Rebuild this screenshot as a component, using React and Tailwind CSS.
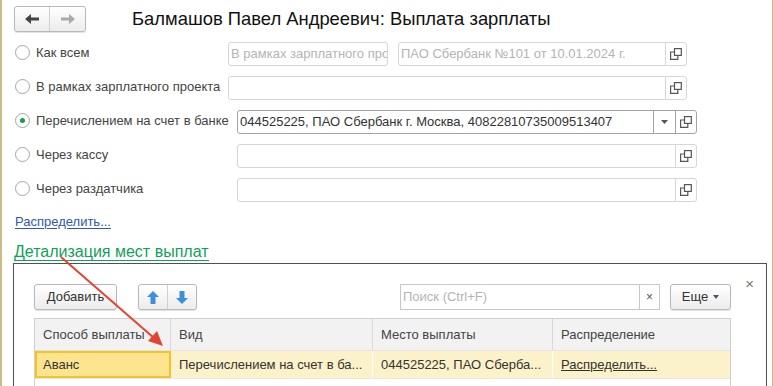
import React from "react";

const CopyIcon = () => (
  <svg width="12" height="12" viewBox="0 0 12 12" fill="none" stroke="#555" strokeWidth="1.2">
    <rect x="4.5" y="0.6" width="6.8" height="6.8" />
    <path d="M4.5 4 H0.6 V11.4 H7.8 V7.4" />
  </svg>
);

const Radio = ({ checked }) => (
  <span className="flex h-[15px] w-[15px] shrink-0 items-center justify-center rounded-full border border-[#a6a6a6] bg-white">
    {checked && <span className="h-[5px] w-[5px] rounded-full bg-[#1a9c4c]" />}
  </span>
);

const Field = ({ width, placeholder, value, dropdown, dark, noCopy }) => (
  <div
    className={`flex h-[24px] items-stretch rounded-[3px] border bg-white ${
      dark ? "border-[#a3a3a3]" : "border-[#d6d6d6]"
    }`}
    style={{ width }}
  >
    <div className="flex min-w-0 flex-1 items-center overflow-hidden whitespace-nowrap px-[2px] text-[13px]">
      {placeholder && <span className="text-[#b4b4b4]">{placeholder}</span>}
      {value && <span className="text-[#333]">{value}</span>}
    </div>
    {dropdown && (
      <div className={`flex w-[22px] items-center justify-center border-l ${dark ? "border-[#a3a3a3]" : "border-[#d6d6d6]"}`}>
        <svg width="7" height="4" viewBox="0 0 7 4">
          <path d="M0 0 H7 L3.5 4 Z" fill="#555" />
        </svg>
      </div>
    )}
    {!noCopy && (
      <div className={`flex w-[21px] items-center justify-center border-l ${dark ? "border-[#a3a3a3]" : "border-[#d6d6d6]"}`}>
        <CopyIcon />
      </div>
    )}
  </div>
);

const Row = ({ label, checked, labelWidth, children }) => (
  <div className="flex h-[24px] items-center">
    <div className="mb-[3px] flex items-center gap-[6px] pl-[1px]" style={{ width: labelWidth }}>
      <Radio checked={checked} />
      <span className="whitespace-nowrap text-[13px] leading-none text-[#444]">{label}</span>
    </div>
    {children}
  </div>
);

const btn =
  "flex h-[26px] items-center justify-center rounded-[3px] border border-[#b8b8b8] bg-gradient-to-b from-white to-[#ececec] shadow-[0_1px_1px_rgba(0,0,0,0.12)]";

export default function App() {
  return (
    <div className="relative h-[386px] w-[773px] overflow-hidden border-l-2 border-r border-[#cbbd85] bg-white pl-3 font-['Liberation_Sans',Arial,sans-serif]">
      <div className="flex h-[32px] items-end">
        <div className={`${btn} h-[25px] w-[72px] !justify-start`}>
          <div className="flex h-full w-[36px] items-center justify-center border-r border-[#d0d0d0]">
            <svg width="14" height="10" viewBox="0 0 14 10">
              <path d="M0 5 L6 0 V3.5 H14 V6.5 H6 V10 Z" fill="#444" />
            </svg>
          </div>
          <div className="flex h-full w-[36px] items-center justify-center">
            <svg width="14" height="10" viewBox="0 0 14 10">
              <path d="M14 5 L8 0 V3.5 H0 V6.5 H8 V10 Z" fill="#aaa" />
            </svg>
          </div>
        </div>
        <h1 className="mb-[4px] ml-[46px] text-[18.4px] leading-none text-[#111]">
          Балмашов Павел Андреевич: Выплата зарплаты
        </h1>
      </div>

      <div className="mt-[10px] flex flex-col gap-[10px]">
        <Row label="Как всем" labelWidth={214}>
          <div className="flex gap-[10px]">
            <Field width={160} placeholder="В рамках зарплатного проекта" noCopy />
            <Field width={289} placeholder="ПАО Сбербанк №101 от 10.01.2024 г." />
          </div>
        </Row>
        <Row label="В рамках зарплатного проекта" labelWidth={214}>
          <Field width={459} />
        </Row>
        <Row label="Перечислением на счет в банке" checked labelWidth={223}>
          <Field width={460} dark dropdown value="044525225, ПАО Сбербанк г. Москва, 40822810735009513407" />
        </Row>
        <Row label="Через кассу" labelWidth={223}>
          <Field width={460} />
        </Row>
        <Row label="Через раздатчика" labelWidth={223}>
          <Field width={460} />
        </Row>
      </div>

      <div className="mt-[13px] w-fit pl-[1px] text-[13px] leading-none text-[#2f57b7] underline underline-offset-2">
        Распределить...
      </div>

      <div className="mt-[15px] w-fit border-b border-[#11a05a] text-[16px] leading-[17px] text-[#11a05a]">
        Детализация мест выплат
      </div>

      <div className="relative ml-[-1px] mt-[2px] h-[200px] w-[754px] border border-[#505050] bg-white px-[20px] pt-[20px]">
        <span className="absolute right-[12px] top-[12px] text-[15px] leading-none text-[#777]">×</span>
        <div className="flex w-[697px] items-center">
          <div className={`${btn} w-[83px] text-[13px] text-[#333]`}>Добавить</div>
          <div className={`${btn} ml-[21px] w-[59px] !justify-start`}>
            <div className="flex h-full w-[30px] items-center justify-center border-r border-[#d0d0d0]">
              <svg width="12" height="13" viewBox="0 0 12 13">
                <path d="M6 0 L12 6 H8.5 V13 H3.5 V6 H0 Z" fill="#3c8fd9" />
              </svg>
            </div>
            <div className="flex h-full w-[28px] items-center justify-center">
              <svg width="12" height="13" viewBox="0 0 12 13">
                <path d="M6 13 L12 7 H8.5 V0 H3.5 V7 H0 Z" fill="#3c8fd9" />
              </svg>
            </div>
          </div>
          <div className="ml-auto flex h-[26px] w-[260px] items-stretch border border-[#c8c8c8] bg-white">
            <div className="flex flex-1 items-center px-[2px] text-[13px] text-[#b4b4b4]">Поиск (Ctrl+F)</div>
            <div className="flex w-[20px] items-center justify-center border-l border-[#c8c8c8] text-[12px] text-[#555]">×</div>
          </div>
          <div className={`${btn} ml-[10px] w-[61px] gap-[5px] text-[13px] text-[#333]`}>
            Еще
            <svg width="6" height="4" viewBox="0 0 6 4">
              <path d="M0 0 H6 L3 4 Z" fill="#555" />
            </svg>
          </div>
        </div>

        <div className="mt-[8px] w-[697px] border border-[#cfcfcf]">
          <div className="grid h-[31px] grid-cols-[136px_202px_180px_1fr] bg-[#f2f2f2] text-[13px] text-[#444]">
            <div className="flex items-center border-r border-[#d9d9d9] px-[8px]">Способ выплаты</div>
            <div className="flex items-center border-r border-[#d9d9d9] px-[8px]">Вид</div>
            <div className="flex items-center border-r border-[#d9d9d9] px-[8px]">Место выплаты</div>
            <div className="flex items-center px-[8px]">Распределение</div>
          </div>
          <div className="grid h-[28px] grid-cols-[136px_202px_180px_1fr] border-t border-[#e3e3e3] bg-[#fcf2c9] text-[13px] text-[#333]">
            <div className="flex items-center border-2 border-[#f5c22b] bg-[#fde58f] px-[6px]">Аванс</div>
            <div className="flex items-center overflow-hidden whitespace-nowrap border-r border-[#fff] px-[8px]">Перечислением на счет в ба...</div>
            <div className="flex items-center overflow-hidden whitespace-nowrap border-r border-[#fff] px-[8px]">044525225, ПАО Сберба...</div>
            <div className="flex items-center px-[8px] underline">Распределить...</div>
          </div>
          <div className="h-[40px] border-t border-[#e8e8e8]" />
        </div>
      </div>

      <svg className="pointer-events-none absolute left-0 top-0" width="773" height="386">
        <line x1="59" y1="257" x2="152" y2="338" stroke="#e2452f" strokeWidth="2" />
        <path d="M161 346 L146 341 L155 331 Z" fill="#e2452f" />
      </svg>
    </div>
  );
}
